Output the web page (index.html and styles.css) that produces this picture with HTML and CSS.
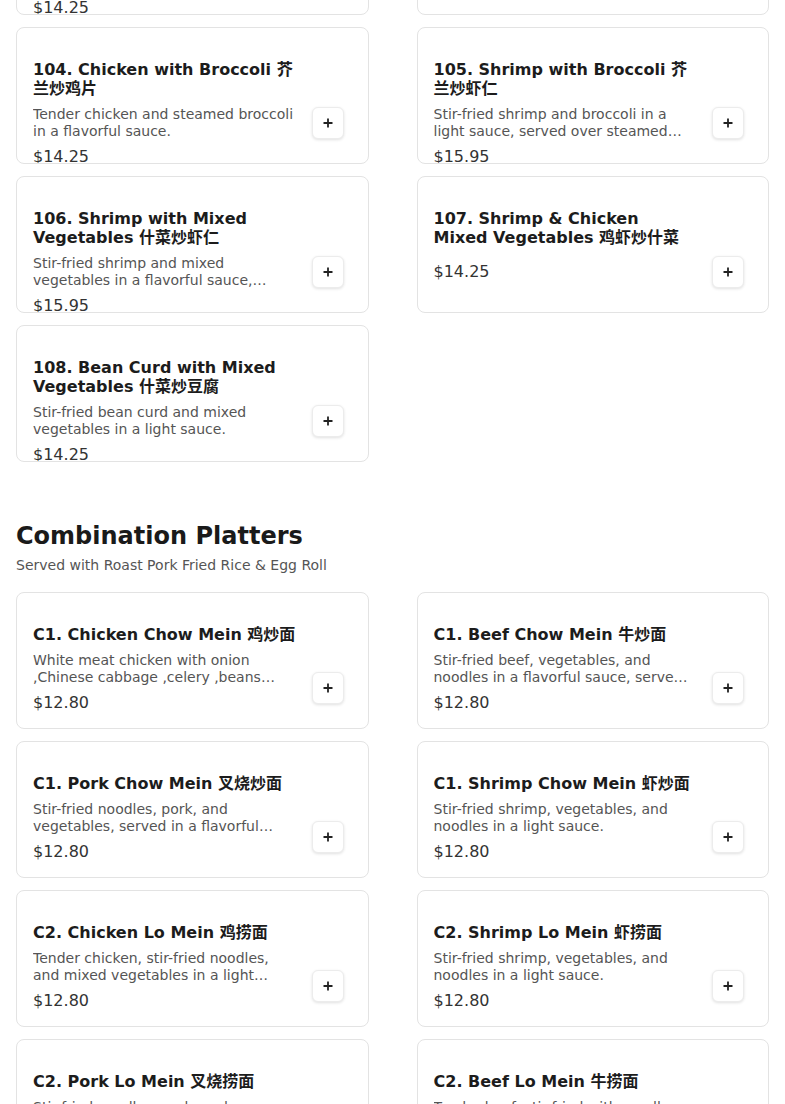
FILE: index.html
```html
<!DOCTYPE html>
<html lang="en">
<head>
<meta charset="utf-8">
<title>Menu</title>
<link rel="stylesheet" href="styles.css">
</head>
<body>
<main class="menu">
  <section class="section section-first">
    <div class="grid">
      <article class="card">
        <div class="card-body">
          <h3 class="card-title">102. Moo Goo Gai Pan 蘑菇鸡片</h3>
          <p class="card-desc">Sliced chicken with mushrooms and vegetables in a white sauce.</p>
          <div class="card-price">$14.25</div>
        </div>
        <div class="card-action"><button class="add-btn" aria-label="Add"><svg viewBox="0 0 10 10" width="10" height="10"><path d="M5 0.5V9.5M0.5 5H9.5" stroke="#222" stroke-width="1.8" fill="none"/></svg></button></div>
      </article>
      <article class="card">
        <div class="card-body no-desc">
          <h3 class="card-title">103. Chicken with Cashew Nuts 腰果鸡</h3>
          <div class="card-price">$14.25</div>
        </div>
        <div class="card-action"><button class="add-btn" aria-label="Add"><svg viewBox="0 0 10 10" width="10" height="10"><path d="M5 0.5V9.5M0.5 5H9.5" stroke="#222" stroke-width="1.8" fill="none"/></svg></button></div>
      </article>
      <article class="card">
        <div class="card-body">
          <h3 class="card-title">104. Chicken with Broccoli 芥兰炒鸡片</h3>
          <p class="card-desc">Tender chicken and steamed broccoli in a flavorful sauce.</p>
          <div class="card-price">$14.25</div>
        </div>
        <div class="card-action"><button class="add-btn" aria-label="Add"><svg viewBox="0 0 10 10" width="10" height="10"><path d="M5 0.5V9.5M0.5 5H9.5" stroke="#222" stroke-width="1.8" fill="none"/></svg></button></div>
      </article>
      <article class="card">
        <div class="card-body">
          <h3 class="card-title">105. Shrimp with Broccoli 芥兰炒虾仁</h3>
          <p class="card-desc">Stir-fried shrimp and broccoli in a light sauce, served over steamed white rice.</p>
          <div class="card-price">$15.95</div>
        </div>
        <div class="card-action"><button class="add-btn" aria-label="Add"><svg viewBox="0 0 10 10" width="10" height="10"><path d="M5 0.5V9.5M0.5 5H9.5" stroke="#222" stroke-width="1.8" fill="none"/></svg></button></div>
      </article>
      <article class="card">
        <div class="card-body">
          <h3 class="card-title">106. Shrimp with Mixed Vegetables 什菜炒虾仁</h3>
          <p class="card-desc">Stir-fried shrimp and mixed vegetables in a flavorful sauce, served with rice.</p>
          <div class="card-price">$15.95</div>
        </div>
        <div class="card-action"><button class="add-btn" aria-label="Add"><svg viewBox="0 0 10 10" width="10" height="10"><path d="M5 0.5V9.5M0.5 5H9.5" stroke="#222" stroke-width="1.8" fill="none"/></svg></button></div>
      </article>
      <article class="card">
        <div class="card-body no-desc">
          <h3 class="card-title">107. Shrimp &amp; Chicken Mixed Vegetables 鸡虾炒什菜</h3>
          <div class="card-price">$14.25</div>
        </div>
        <div class="card-action"><button class="add-btn" aria-label="Add"><svg viewBox="0 0 10 10" width="10" height="10"><path d="M5 0.5V9.5M0.5 5H9.5" stroke="#222" stroke-width="1.8" fill="none"/></svg></button></div>
      </article>
      <article class="card">
        <div class="card-body">
          <h3 class="card-title">108. Bean Curd with Mixed Vegetables 什菜炒豆腐</h3>
          <p class="card-desc">Stir-fried bean curd and mixed vegetables in a light sauce.</p>
          <div class="card-price">$14.25</div>
        </div>
        <div class="card-action"><button class="add-btn" aria-label="Add"><svg viewBox="0 0 10 10" width="10" height="10"><path d="M5 0.5V9.5M0.5 5H9.5" stroke="#222" stroke-width="1.8" fill="none"/></svg></button></div>
      </article>
    </div>
  </section>

  <section class="section">
    <h2 class="section-title">Combination Platters</h2>
    <p class="section-sub">Served with Roast Pork Fried Rice &amp; Egg Roll</p>
    <div class="grid">
      <article class="card">
        <div class="card-body">
          <h3 class="card-title">C1. Chicken Chow Mein 鸡炒面</h3>
          <p class="card-desc">White meat chicken with onion ,Chinese cabbage ,celery ,beans sprouts and mushrooms.</p>
          <div class="card-price">$12.80</div>
        </div>
        <div class="card-action"><button class="add-btn" aria-label="Add"><svg viewBox="0 0 10 10" width="10" height="10"><path d="M5 0.5V9.5M0.5 5H9.5" stroke="#222" stroke-width="1.8" fill="none"/></svg></button></div>
      </article>
      <article class="card">
        <div class="card-body">
          <h3 class="card-title">C1. Beef Chow Mein 牛炒面</h3>
          <p class="card-desc">Stir-fried beef, vegetables, and noodles in a flavorful sauce, served with rice.</p>
          <div class="card-price">$12.80</div>
        </div>
        <div class="card-action"><button class="add-btn" aria-label="Add"><svg viewBox="0 0 10 10" width="10" height="10"><path d="M5 0.5V9.5M0.5 5H9.5" stroke="#222" stroke-width="1.8" fill="none"/></svg></button></div>
      </article>
      <article class="card">
        <div class="card-body">
          <h3 class="card-title">C1. Pork Chow Mein 叉烧炒面</h3>
          <p class="card-desc">Stir-fried noodles, pork, and vegetables, served in a flavorful sauce.</p>
          <div class="card-price">$12.80</div>
        </div>
        <div class="card-action"><button class="add-btn" aria-label="Add"><svg viewBox="0 0 10 10" width="10" height="10"><path d="M5 0.5V9.5M0.5 5H9.5" stroke="#222" stroke-width="1.8" fill="none"/></svg></button></div>
      </article>
      <article class="card">
        <div class="card-body">
          <h3 class="card-title">C1. Shrimp Chow Mein 虾炒面</h3>
          <p class="card-desc">Stir-fried shrimp, vegetables, and noodles in a light sauce.</p>
          <div class="card-price">$12.80</div>
        </div>
        <div class="card-action"><button class="add-btn" aria-label="Add"><svg viewBox="0 0 10 10" width="10" height="10"><path d="M5 0.5V9.5M0.5 5H9.5" stroke="#222" stroke-width="1.8" fill="none"/></svg></button></div>
      </article>
      <article class="card">
        <div class="card-body">
          <h3 class="card-title">C2. Chicken Lo Mein 鸡捞面</h3>
          <p class="card-desc">Tender chicken, stir-fried noodles, and mixed vegetables in a light sauce.</p>
          <div class="card-price">$12.80</div>
        </div>
        <div class="card-action"><button class="add-btn" aria-label="Add"><svg viewBox="0 0 10 10" width="10" height="10"><path d="M5 0.5V9.5M0.5 5H9.5" stroke="#222" stroke-width="1.8" fill="none"/></svg></button></div>
      </article>
      <article class="card">
        <div class="card-body">
          <h3 class="card-title">C2. Shrimp Lo Mein 虾捞面</h3>
          <p class="card-desc">Stir-fried shrimp, vegetables, and noodles in a light sauce.</p>
          <div class="card-price">$12.80</div>
        </div>
        <div class="card-action"><button class="add-btn" aria-label="Add"><svg viewBox="0 0 10 10" width="10" height="10"><path d="M5 0.5V9.5M0.5 5H9.5" stroke="#222" stroke-width="1.8" fill="none"/></svg></button></div>
      </article>
      <article class="card">
        <div class="card-body">
          <h3 class="card-title">C2. Pork Lo Mein 叉烧捞面</h3>
          <p class="card-desc">Stir-fried noodles, pork, and vegetables in a savory sauce.</p>
          <div class="card-price">$12.80</div>
        </div>
        <div class="card-action"><button class="add-btn" aria-label="Add"><svg viewBox="0 0 10 10" width="10" height="10"><path d="M5 0.5V9.5M0.5 5H9.5" stroke="#222" stroke-width="1.8" fill="none"/></svg></button></div>
      </article>
      <article class="card">
        <div class="card-body">
          <h3 class="card-title">C2. Beef Lo Mein 牛捞面</h3>
          <p class="card-desc">Tender beef, stir-fried with noodles and vegetables in a rich sauce.</p>
          <div class="card-price">$12.80</div>
        </div>
        <div class="card-action"><button class="add-btn" aria-label="Add"><svg viewBox="0 0 10 10" width="10" height="10"><path d="M5 0.5V9.5M0.5 5H9.5" stroke="#222" stroke-width="1.8" fill="none"/></svg></button></div>
      </article>
    </div>
  </section>
</main>
</body>
</html>
```

FILE: styles.css
```css
html, body {
  margin: 0;
  padding: 0;
  background: #ffffff;
}

body {
  font-family: "DejaVu Sans", "Noto Sans CJK SC", sans-serif;
  color: #1a1a1a;
}

.menu {
  padding: 0 16px;
  margin-top: -122px; /* page is scrolled: the row above is cut off */
}

.section + .section {
  margin-top: 58px;
}

.section-title {
  margin: 0 0 3px;
  font-size: 24px;
  line-height: 32px;
  font-weight: 700;
  color: #1a1a1a;
}

.section-sub {
  margin: 0 0 17px;
  font-size: 14px;
  line-height: 20px;
  color: #555555;
}

.grid {
  display: grid;
  grid-template-columns: 1fr 1fr;
  column-gap: 48px;
  row-gap: 12px;
}

.card {
  display: flex;
  gap: 8px;
  height: 137px;
  box-sizing: border-box;
  padding: 16px;
  border: 1px solid #e3e3e3;
  border-radius: 8px;
  background: #ffffff;
  overflow: hidden;
}

.card-body {
  flex: 1;
  min-width: 0;
  padding-top: 16px;
}

.card-title {
  margin: 0 0 8px;
  font-size: 16px;
  line-height: 19px;
  font-weight: 700;
  color: #1c1c1c;
}

.no-desc .card-title {
  margin-bottom: 15px;
}

.card-desc {
  margin: 0 0 7px;
  font-size: 14px;
  line-height: 17px;
  color: #555555;
  display: -webkit-box;
  -webkit-line-clamp: 2;
  -webkit-box-orient: vertical;
  overflow: hidden;
}

.card-price {
  font-size: 16px;
  line-height: 19px;
  color: #333333;
}

.card-action {
  flex: 0 0 48px;
  width: 48px;
  height: 48px;
  align-self: flex-end;
  display: flex;
  align-items: center;
  justify-content: center;
}

.add-btn {
  width: 32px;
  height: 32px;
  padding: 0;
  display: flex;
  align-items: center;
  justify-content: center;
  background: #ffffff;
  border: 1px solid #ececec;
  border-radius: 6px;
  box-shadow: 0 1px 3px rgba(0, 0, 0, 0.12);
  cursor: pointer;
}
```
